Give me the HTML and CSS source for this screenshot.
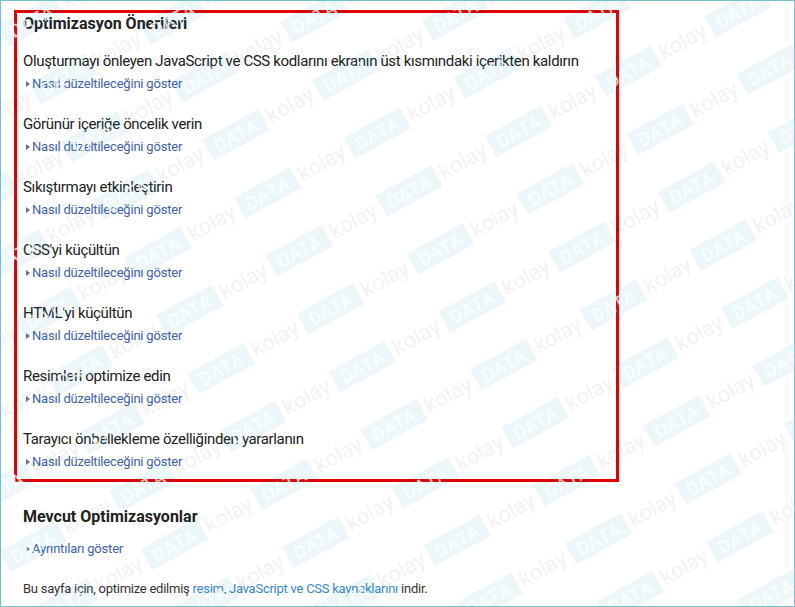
FILE: index.html
```html
<html>
    <head>
        <meta charset="utf-8" />
        <title>Optimizasyon Önerileri</title>
        <link rel="stylesheet" href="styles.css">
    </head>

    <body>
        <div class="page">
            <section class="box">
                <h2 class="heading">Optimizasyon Önerileri</h2>
                <div class="rule">
                    <p class="rule-title">Oluşturmayı önleyen JavaScript ve CSS kodlarını ekranın üst kısmındaki içerikten kaldırın</p>
                    <a class="toggle" href="#">Nasıl düzeltileceğini göster</a>
                </div>
                <div class="rule">
                    <p class="rule-title">Görünür içeriğe öncelik verin</p>
                    <a class="toggle" href="#">Nasıl düzeltileceğini göster</a>
                </div>
                <div class="rule">
                    <p class="rule-title">Sıkıştırmayı etkinleştirin</p>
                    <a class="toggle" href="#">Nasıl düzeltileceğini göster</a>
                </div>
                <div class="rule">
                    <p class="rule-title">CSS'yi küçültün</p>
                    <a class="toggle" href="#">Nasıl düzeltileceğini göster</a>
                </div>
                <div class="rule">
                    <p class="rule-title">HTML'yi küçültün</p>
                    <a class="toggle" href="#">Nasıl düzeltileceğini göster</a>
                </div>
                <div class="rule">
                    <p class="rule-title">Resimleri optimize edin</p>
                    <a class="toggle" href="#">Nasıl düzeltileceğini göster</a>
                </div>
                <div class="rule">
                    <p class="rule-title">Tarayıcı önbellekleme özelliğinden yararlanın</p>
                    <a class="toggle" href="#">Nasıl düzeltileceğini göster</a>
                </div>
            </section>

            <section class="current">
                <h2 class="heading">Mevcut Optimizasyonlar</h2>
                <a class="toggle" href="#">Ayrıntıları göster</a>
            </section>

            <p class="download">Bu sayfa için, optimize edilmiş <a href="#">resim</a>, <a href="#">JavaScript ve CSS kaynaklarını</a> indir.</p>

            <!-- kolayDATA watermark over the whole shot -->
            <svg class="watermark" width="795" height="607">
                <defs>
                    <pattern id="wm" width="125" height="66" patternUnits="userSpaceOnUse" patternTransform="translate(204 264) rotate(-28.6)">
                        <text x="1" y="41" class="wm-kolay">kolay</text>
                        <rect x="58" y="22" width="64" height="24" class="wm-box" />
                        <text x="90" y="41" text-anchor="middle" class="wm-data">DATA</text>
                    </pattern>
                </defs>
                <rect width="100%" height="100%" fill="url(#wm)" />
            </svg>
        </div>
    </body>
</html>
```

FILE: styles.css
```css
body {
    margin: 0px;
    padding: 0px;
    font-family: Roboto, 'Liberation Sans', sans-serif;
    color: #212121;
}

.page {
    position: relative;
    height: 607px;
    box-sizing: border-box;
    border: 1px solid #76bfcc;
    padding: 9px 0 0 13px;
    overflow: hidden;
    background-color: white;
}

.box {
    width: 605px;
    box-sizing: border-box;
    border: 3px solid #e30000;
    padding: 0 6px 8px;
}

.heading {
    margin: 1px 0 17px;
    font-size: 16px;
    line-height: 20px;
    font-weight: bold;
}

.rule {
    margin-bottom: 21px;

    &:last-child {
        margin-bottom: 0;
    }
}

.rule-title {
    margin: 0 0 4px;
    font-size: 15px;
    line-height: 20px;
    letter-spacing: -0.35px;
}

.toggle {
    display: flex;
    align-items: center;
    width: fit-content;
    padding-left: 3px;
    font-size: 13px;
    line-height: 18px;
    letter-spacing: -0.2px;
    color: #4262a8;
    text-decoration: none;

    &::before {
        content: '';
        border-left: 4px solid #707070;
        border-top: 3px solid transparent;
        border-bottom: 3px solid transparent;
        margin-right: 2px;
    }
}

.current {
    margin-top: 25px;
    padding-left: 9px;

    .heading {
        margin-bottom: 13px;
    }
}

.download {
    margin: 22px 0 0;
    padding-left: 9px;
    font-size: 13px;
    line-height: 18px;
    letter-spacing: -0.25px;
    color: #333;

    a {
        color: #3a87c4;
        text-decoration: none;
    }
}

.watermark {
    position: absolute;
    top: -1px;
    left: -1px;
    pointer-events: none;
}

.wm-kolay {
    font-family: Roboto, sans-serif;
    font-size: 22px;
    fill: rgba(0, 0, 0, 0.055);
}

.wm-box {
    fill: rgba(0, 140, 190, 0.07);
}

.wm-data {
    font-family: Roboto, sans-serif;
    font-size: 18px;
    letter-spacing: 1px;
    fill: rgba(255, 255, 255, 0.9);
}
```
